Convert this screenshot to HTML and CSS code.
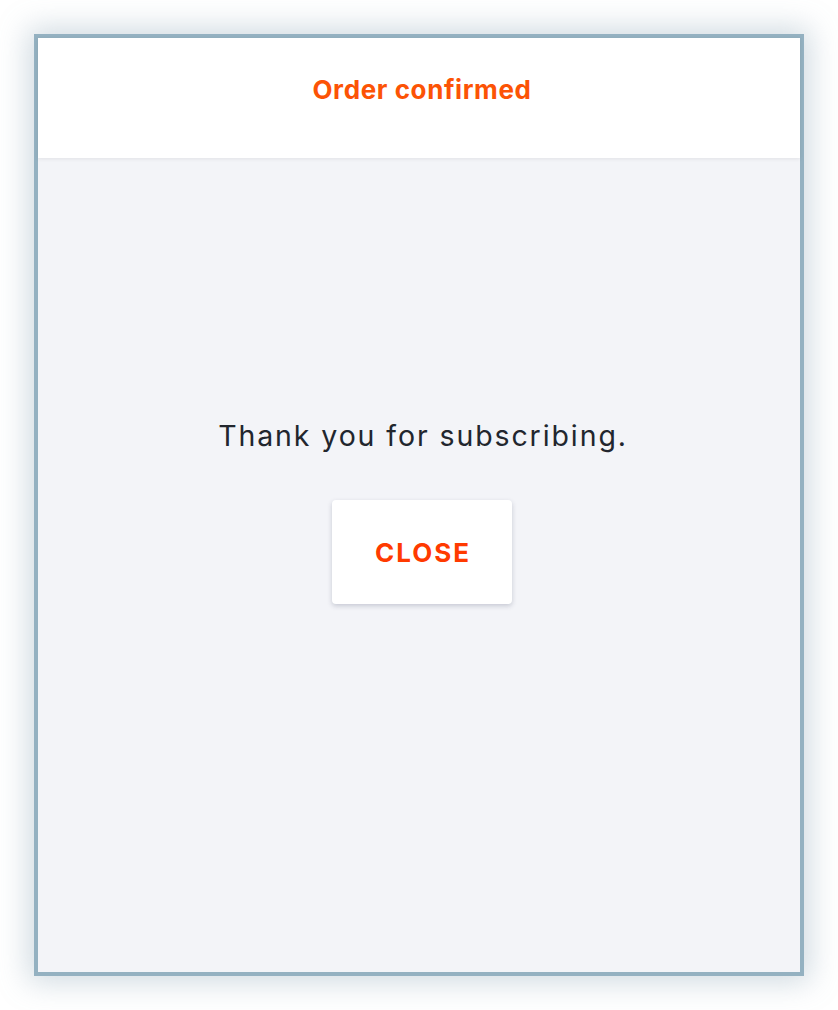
FILE: index.html
```html
<!DOCTYPE html>
<html>
<head>
<meta charset="utf-8">
<link rel="stylesheet" href="styles.css">
</head>
<body>
<div class="stage">
  <div class="frame">
    <header class="head">
      <h1 class="title">Order confirmed</h1>
    </header>
    <main class="content">
      <p class="message">Thank you for subscribing.</p>
      <button class="close">CLOSE</button>
    </main>
    <span class="corner"></span>
  </div>
</div>
</body>
</html>
```
FILE: styles.css
```css
html, body {
  margin: 0;
  padding: 0;
  background: #ffffff;
}
.stage {
  padding: 34px;
  font-family: Inter, "Noto Sans", sans-serif;
}
.frame {
  position: relative;
  box-sizing: border-box;
  width: 770px;
  height: 942px;
  border: 4px solid #94b1c1;
  background: #f3f4f8;
  box-shadow: 0 0 28px 6px rgba(120, 150, 170, 0.35);
  display: flex;
  flex-direction: column;
}
.head {
  height: 120px;
  flex: 0 0 120px;
  background: #ffffff;
  display: flex;
  align-items: center;
  justify-content: center;
  padding-left: 6px;
  box-shadow: 0 1px 4px rgba(0, 0, 0, 0.08);
  position: relative;
  z-index: 1;
}
.title {
  margin: 0;
  font-size: 26px;
  font-weight: 700;
  color: #fc5305;
  letter-spacing: 0.6px;
  transform: translateY(-9px);
}
.content {
  flex: 1;
  display: flex;
  flex-direction: column;
  align-items: center;
  padding-top: 261px;
  padding-left: 6px;
}
.message {
  margin: 0;
  font-size: 28.5px;
  line-height: 34px;
  color: #22262e;
  letter-spacing: 1.9px;
  padding-left: 2px;
}
.close {
  margin-top: 47px;
  width: 180px;
  height: 104px;
  padding: 0 0 0 2px;
  border: none;
  border-radius: 4px;
  background: #ffffff;
  box-shadow: 0 2px 5px rgba(40, 50, 80, 0.22);
  font-family: Inter, "Noto Sans", sans-serif;
  font-size: 26px;
  font-weight: 700;
  color: #ff3a00;
  letter-spacing: 2px;
  cursor: pointer;
}
.corner {
  position: absolute;
  top: 0;
  right: 0;
  width: 0;
  height: 0;
  border-top: 5px solid #333;
  border-left: 5px solid transparent;
}
```
